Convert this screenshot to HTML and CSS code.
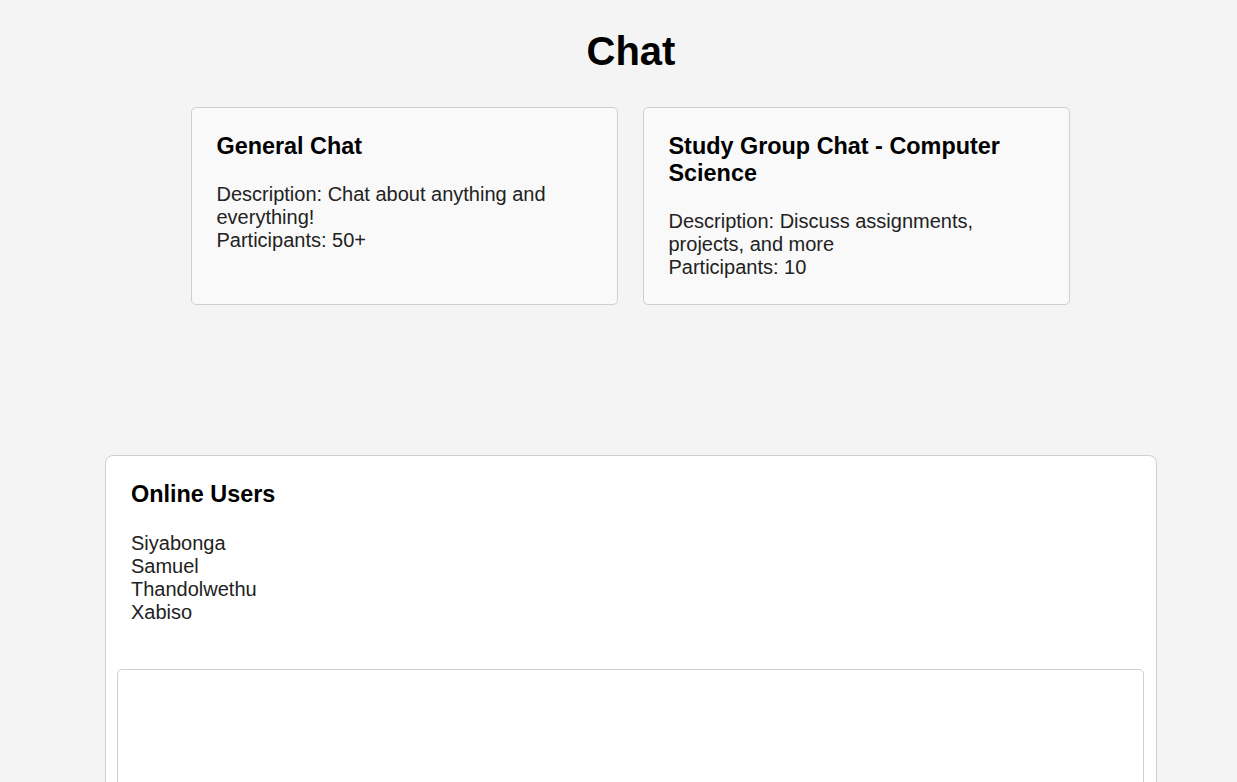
FILE: index.html
```html
<!DOCTYPE html>
<html lang="en">
<head>
<meta charset="utf-8">
<title>Chat</title>
<link rel="stylesheet" href="styles.css">
</head>
<body>
<main class="page">
  <h1 class="title">Chat</h1>
  <section class="rooms">
    <article class="room">
      <h3 class="room-name">General Chat</h3>
      <p class="room-info">Description: Chat about anything and everything!<br>Participants: 50+</p>
    </article>
    <article class="room">
      <h3 class="room-name">Study Group Chat - Computer Science</h3>
      <p class="room-info">Description: Discuss assignments, projects, and more<br>Participants: 10</p>
    </article>
  </section>
  <section class="chat-panel">
    <div class="online">
      <h3 class="online-title">Online Users</h3>
      <ul class="user-list">
        <li>Siyabonga</li>
        <li>Samuel</li>
        <li>Thandolwethu</li>
        <li>Xabiso</li>
      </ul>
    </div>
    <div class="messages"></div>
  </section>
</main>
</body>
</html>
```

FILE: styles.css
```css
html, body {
  margin: 0;
  padding: 0;
}

body {
  background: #f4f4f4;
  font-family: "Liberation Sans", Arial, sans-serif;
  font-size: 20px;
  color: #222;
  overflow: hidden;
}

.page {
  padding: 28px 0 0 23px;
  display: flex;
  flex-direction: column;
  align-items: center;
}

.title {
  margin: 0 0 33px 2px;
  font-size: 40px;
  font-weight: bold;
  color: #000;
  line-height: 46px;
}

.rooms {
  display: flex;
  gap: 25px;
  align-items: stretch;
}

.room {
  box-sizing: border-box;
  width: 427px;
  background: #f9f9f9;
  border: 1px solid #cfcfcf;
  border-radius: 5px;
  padding: 25px;
}

.room-name {
  margin: 0 0 23.4px;
  font-size: 23.4px;
  font-weight: bold;
  color: #000;
}

.room-info {
  margin: 0;
  line-height: 23px;
}

.chat-panel {
  box-sizing: border-box;
  width: 1052px;
  margin: 150px 0 0 2px;
  background: #fff;
  border: 1px solid #cfcfcf;
  border-radius: 8px;
  padding: 25px 12px 0 11px;
  height: 400px;
}

.online {
  padding: 0 14px;
}

.online-title {
  margin: 0 0 24px;
  font-size: 23.4px;
  font-weight: bold;
  color: #000;
}

.user-list {
  list-style: none;
  margin: 0;
  padding: 0;
  line-height: 23px;
}

.messages {
  margin-top: 45px;
  height: 300px;
  border: 1px solid #cfcfcf;
  border-radius: 5px;
  background: #fff;
}
```
